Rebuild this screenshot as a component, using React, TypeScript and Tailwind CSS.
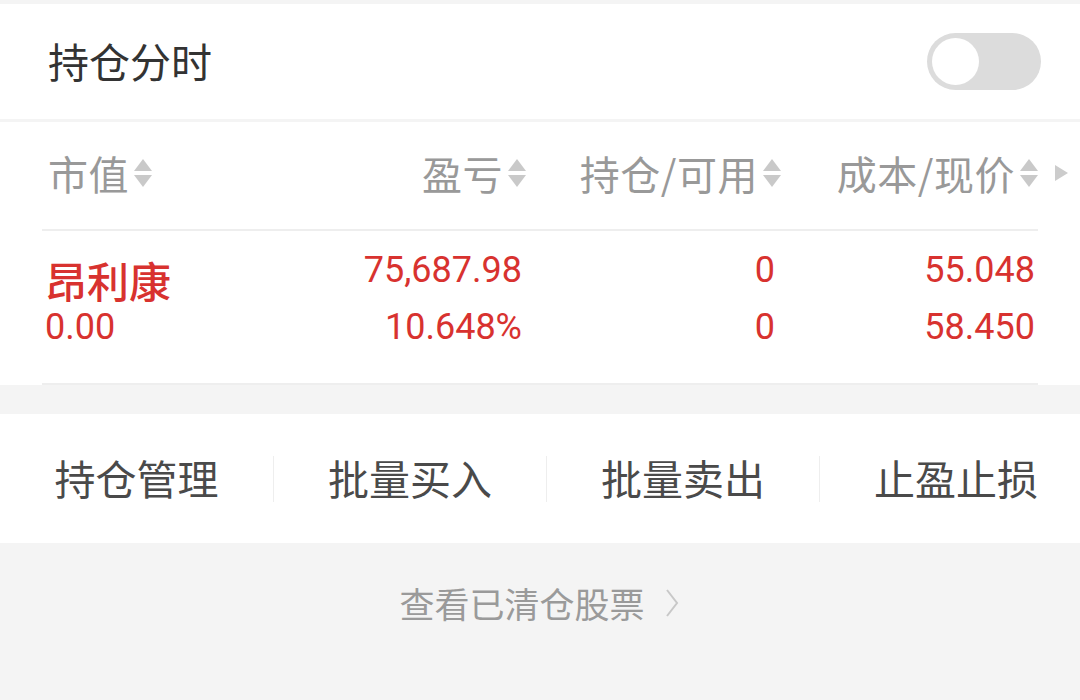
import type { FC } from 'react';

const CJK = '[font-family:"Noto_Sans_CJK_SC","Noto_Sans",sans-serif]';
const NUM = '[font-family:Roboto,"Noto_Sans",sans-serif]';

// ── small sort arrows next to the column titles ──────────────────────────────
const SortIcon: FC = () => (
    <svg width="20" height="28" viewBox="0 0 20 28" className="ml-[4px] shrink-0">
        <polygon points="10,0 19,12 1,12" fill="#c9c9c9" />
        <polygon points="1,16 19,16 10,28" fill="#c9c9c9" />
    </svg>
);

const HeaderCell: FC<{ label: string; className?: string }> = ({ label, className }) => (
    <div className={`flex items-center ${className ?? ''}`}>
        <span className={`${CJK} text-[40px] leading-[48px] text-[#999999] tracking-[0.5px]`}>{label}</span>
        <SortIcon />
    </div>
);

const actions = ['持仓管理', '批量买入', '批量卖出', '止盈止损'];

export default function App() {
    return (
        <div className="w-[1080px] h-[700px] bg-[#f4f4f4] overflow-hidden">
            <div className="h-[4px]" />

            {/* ── title row with switch ── */}
            <div className="bg-white h-[115px] flex items-center justify-between pl-[48px] pr-[39px]">
                <span className={`${CJK} text-[41px] leading-[48px] text-[#333333] -mt-[3px]`}>持仓分时</span>
                <div className="w-[114px] h-[57px] rounded-full bg-[#dcdcdc] p-[5px] flex items-center">
                    <div className="w-[47px] h-[47px] rounded-full bg-white" />
                </div>
            </div>

            <div className="h-[3px]" />

            {/* ── column titles ── */}
            <div className="bg-white h-[107px] flex items-center pl-[48px] pb-[6px]">
                <HeaderCell label="市值" className="w-[200px]" />
                <HeaderCell label="盈亏" className="w-[279px] justify-end" />
                <HeaderCell label="持仓/可用" className="w-[255px] justify-end" />
                <HeaderCell label="成本/现价" className="w-[257px] justify-end" />
                <svg width="13" height="16" viewBox="0 0 13 16" className="ml-[16px]">
                    <polygon points="0,0 13,8 0,16" fill="#cccccc" />
                </svg>
            </div>

            {/* ── position row ── */}
            <div className="bg-white px-[42px]">
                <div className="border-t-2 border-b-2 border-[#eeeeee] h-[156px] flex text-[#d8322f]">
                    <div className="w-[180px] pl-[3px] flex flex-col">
                        <span className={`${CJK} text-[42px] leading-[46px] mt-[26px] font-medium`}>昂利康</span>
                        <span className={`${NUM} text-[36px] leading-[40px] mt-[4px]`}>0.00</span>
                    </div>
                    <div className={`${NUM} w-[300px] flex flex-col items-end gap-[17px] pt-[19px] text-[36px] leading-[40px]`}>
                        <span>75,687.98</span>
                        <span>10.648%</span>
                    </div>
                    <div className={`${NUM} w-[253px] flex flex-col items-end gap-[17px] pt-[19px] text-[36px] leading-[40px]`}>
                        <span>0</span>
                        <span>0</span>
                    </div>
                    <div className={`${NUM} w-[260px] flex flex-col items-end gap-[17px] pt-[19px] text-[36px] leading-[40px]`}>
                        <span>55.048</span>
                        <span>58.450</span>
                    </div>
                </div>
            </div>

            <div className="h-[29px]" />

            {/* ── action buttons ── */}
            <div className="bg-white h-[129px] flex items-center overflow-hidden">
                {actions.map((a, i) => (
                    <div key={a} className="w-[273px] shrink-0 h-full flex items-center">
                        {i > 0 && <div className="w-px h-[46px] bg-[#eeeeee]" />}
                        <span className={`${CJK} flex-1 text-center text-[41px] leading-[48px] text-[#4a4a4a] -mt-[3px]`}>{a}</span>
                    </div>
                ))}
            </div>

            {/* ── cleared positions link ── */}
            <div className="h-[120px] flex items-center justify-center gap-[20px] pr-[2px]">
                <span className={`${CJK} text-[35px] leading-[44px] text-[#9a9a9a]`}>查看已清仓股票</span>
                <svg width="14" height="30" viewBox="0 0 14 30">
                    <polyline points="2,2 12,15 2,28" fill="none" stroke="#c8c8c8" strokeWidth="2" />
                </svg>
            </div>
        </div>
    );
}
